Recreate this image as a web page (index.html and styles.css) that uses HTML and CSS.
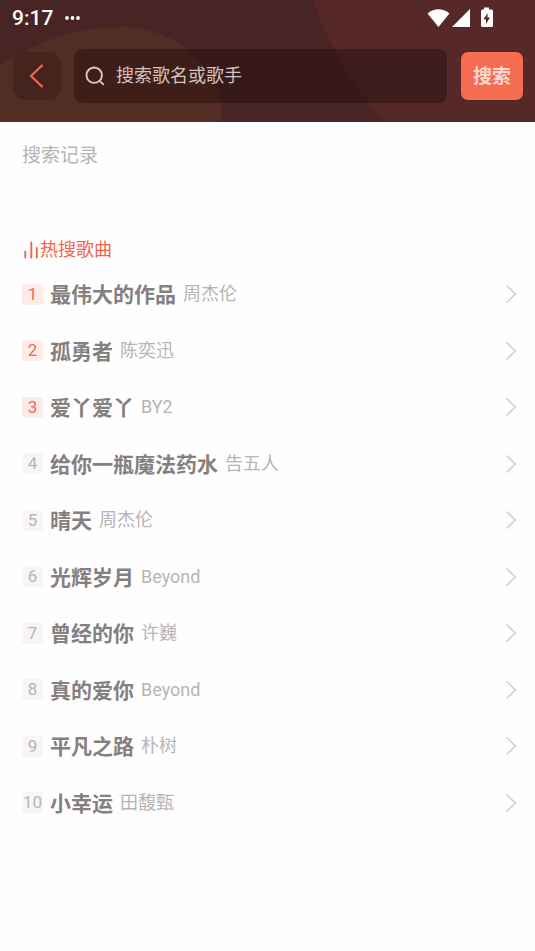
FILE: index.html
```html
<!DOCTYPE html>
<html lang="zh-CN">
<head>
<meta charset="utf-8">
<meta name="viewport" content="width=device-width, initial-scale=1">
<title>搜索</title>
<link rel="stylesheet" href="styles.css">
</head>
<body>
<header class="header">
  <svg class="header-art" viewBox="0 0 535 122" preserveAspectRatio="none" aria-hidden="true">
    <path d="M0 65C42 39 80 26 124 27C178 29 222 67 222 122H0Z" fill="#522d23"/>
    <path d="M313 0C327 43 352 84 384 122H535V0Z" fill="#572828"/>
  </svg>
  <div class="status">
    <span class="time">9:17</span>
    <svg class="dots" width="16" height="6" viewBox="0 0 16 6" fill="#fff" aria-hidden="true"><circle cx="2" cy="3" r="1.900"/><circle cx="7.500" cy="3" r="1.900"/><circle cx="13" cy="3" r="1.900"/></svg>
    <svg class="system" width="68" height="22" viewBox="0 0 68 22" fill="#fff" aria-hidden="true">
      <path d="M.5 6.400Q11.500-1.800 22.500 6.400L11.500 20Z"/>
      <path d="M25 20L43 2V20Z"/>
      <path fill-rule="evenodd" d="M57 .5H62V2.500H64.500Q66 2.500 66 4V18.500Q66 20 64.500 20H55.500Q54 20 54 18.500V4Q54 2.500 55.500 2.500H57ZM60.500 6L56.500 12.500H59V17L63 10.500H60.500Z"/>
    </svg>
  </div>
  <form class="search">
    <button class="back" type="button" aria-label="返回">
      <svg width="16" height="26" viewBox="0 0 16 26" fill="none" stroke="#ee6550" stroke-width="2.300" stroke-linecap="round" stroke-linejoin="round" aria-hidden="true"><path d="M13 2.500L2 13L13 23.500"/></svg>
    </button>
    <label class="field">
      <svg width="20" height="20" viewBox="0 0 20 20" fill="none" stroke="#dac9bd" stroke-width="1.900" stroke-linecap="round" aria-hidden="true"><circle cx="9.200" cy="9.200" r="7.700"/><path d="M14.800 14.800L18.300 18.300"/></svg>
      <input type="text" placeholder="搜索歌名或歌手" aria-label="搜索歌名或歌手">
    </label>
    <button class="submit" type="submit">搜索</button>
  </form>
</header>
<main class="content">
  <h2 class="history">搜索记录</h2>
  <h2 class="hot">
    <svg width="18" height="18" viewBox="0 0 18 18" fill="none" stroke="#ee654d" stroke-width="1.900" stroke-linecap="round" aria-hidden="true"><path d="M3.300 10.500V16.500M9.300 1.500V16.500M14.800 7V16.500"/></svg>
    热搜歌曲
  </h2>
  <ol class="songs">
    <li><a class="song top" href="#"><span class="rank">1</span><b class="title">最伟大的作品</b><span class="artist">周杰伦</span><svg class="arrow" viewBox="0 0 12 20" aria-hidden="true"><path d="M1.500 1.500L10.500 10L1.500 18.500"/></svg></a></li>
    <li><a class="song top" href="#"><span class="rank">2</span><b class="title">孤勇者</b><span class="artist">陈奕迅</span><svg class="arrow" viewBox="0 0 12 20" aria-hidden="true"><path d="M1.500 1.500L10.500 10L1.500 18.500"/></svg></a></li>
    <li><a class="song top" href="#"><span class="rank">3</span><b class="title">爱丫爱丫</b><span class="artist">BY2</span><svg class="arrow" viewBox="0 0 12 20" aria-hidden="true"><path d="M1.500 1.500L10.500 10L1.500 18.500"/></svg></a></li>
    <li><a class="song" href="#"><span class="rank">4</span><b class="title">给你一瓶魔法药水</b><span class="artist">告五人</span><svg class="arrow" viewBox="0 0 12 20" aria-hidden="true"><path d="M1.500 1.500L10.500 10L1.500 18.500"/></svg></a></li>
    <li><a class="song" href="#"><span class="rank">5</span><b class="title">晴天</b><span class="artist">周杰伦</span><svg class="arrow" viewBox="0 0 12 20" aria-hidden="true"><path d="M1.500 1.500L10.500 10L1.500 18.500"/></svg></a></li>
    <li><a class="song" href="#"><span class="rank">6</span><b class="title">光辉岁月</b><span class="artist">Beyond</span><svg class="arrow" viewBox="0 0 12 20" aria-hidden="true"><path d="M1.500 1.500L10.500 10L1.500 18.500"/></svg></a></li>
    <li><a class="song" href="#"><span class="rank">7</span><b class="title">曾经的你</b><span class="artist">许巍</span><svg class="arrow" viewBox="0 0 12 20" aria-hidden="true"><path d="M1.500 1.500L10.500 10L1.500 18.500"/></svg></a></li>
    <li><a class="song" href="#"><span class="rank">8</span><b class="title">真的爱你</b><span class="artist">Beyond</span><svg class="arrow" viewBox="0 0 12 20" aria-hidden="true"><path d="M1.500 1.500L10.500 10L1.500 18.500"/></svg></a></li>
    <li><a class="song" href="#"><span class="rank">9</span><b class="title">平凡之路</b><span class="artist">朴树</span><svg class="arrow" viewBox="0 0 12 20" aria-hidden="true"><path d="M1.500 1.500L10.500 10L1.500 18.500"/></svg></a></li>
    <li><a class="song" href="#"><span class="rank">10</span><b class="title">小幸运</b><span class="artist">田馥甄</span><svg class="arrow" viewBox="0 0 12 20" aria-hidden="true"><path d="M1.500 1.500L10.500 10L1.500 18.500"/></svg></a></li>
  </ol>
</main>
</body>
</html>
```
FILE: styles.css
```css
* {
  box-sizing: border-box;
}

body {
  margin: 0;
  background: #fefefe;
  font-family: Roboto, "Noto Sans CJK SC", sans-serif;
}

button,
input {
  margin: 0;
  padding: 0;
  border: 0;
  font-family: inherit;
}

svg {
  display: block;
  flex: none;
}

.header {
  position: relative;
  isolation: isolate;
  padding-bottom: 19px;
  background: #492425;
}

.header-art {
  position: absolute;
  inset: 0;
  z-index: -1;
  width: 100%;
  height: 100%;
}

.status {
  display: flex;
  align-items: center;
  gap: 12px;
  height: 36px;
  padding: 0 40px 0 12px;
}

.time {
  color: #fff;
  font-size: 21px;
  font-weight: 500;
  line-height: 36px;
}

.system {
  margin-left: auto;
}

.search {
  display: flex;
  align-items: center;
  margin-top: 13px;
  padding: 0 12px 0 13px;
}

.back {
  display: flex;
  align-items: center;
  justify-content: center;
  width: 48px;
  height: 48px;
  border-radius: 12px;
  background: rgba(35, 14, 14, 0.28);
}

.field {
  display: flex;
  flex: 1;
  align-items: center;
  gap: 11px;
  min-width: 0;
  height: 54px;
  margin: 0 14px 0 13px;
  padding: 0 11px;
  border-radius: 8px;
  background: rgba(35, 14, 14, 0.45);
}

.field input {
  flex: 1;
  min-width: 0;
  outline: 0;
  background: transparent;
  color: #dac9c8;
  font-size: 18px;
  line-height: 26px;
}

.field input::placeholder {
  color: #d3c4c2;
  opacity: 1;
}

.submit {
  width: 62px;
  height: 48px;
  padding-bottom: 4px;
  border-radius: 7px;
  background: #f66c51;
  color: #ffd9cf;
  font-size: 19px;
  font-weight: 700;
}

.content {
  padding: 20px 18px 0 22px;
}

h2 {
  margin: 0;
  font-weight: 400;
}

.history {
  color: #b8b4b4;
  font-size: 19px;
  line-height: 28px;
}

.hot {
  display: flex;
  align-items: center;
  margin-top: 66px;
  color: #ee654d;
  font-size: 18px;
  line-height: 28px;
}

.songs {
  display: grid;
  grid-auto-rows: 1fr;
  min-height: 565px;
  margin: 2px 0 0;
  padding: 0;
  list-style: none;
}

.song {
  display: flex;
  align-items: center;
  gap: 7px;
  height: 100%;
  color: #b8b4b4;
  text-decoration: none;
}

.rank {
  width: 21px;
  border-radius: 3px;
  background: #f9f5f5;
  font-size: 17px;
  line-height: 21px;
  text-align: center;
}

.top .rank {
  background: #feebe7;
  color: #ee6c57;
}

.title {
  padding-top: 2px;
  color: #858080;
  font-size: 21px;
  line-height: 30px;
}

.artist {
  font-size: 18px;
  line-height: 28px;
}

.arrow {
  width: 12px;
  height: 20px;
  margin-left: auto;
  fill: none;
  stroke: #cfcdcd;
  stroke-width: 1.5px;
}
```
